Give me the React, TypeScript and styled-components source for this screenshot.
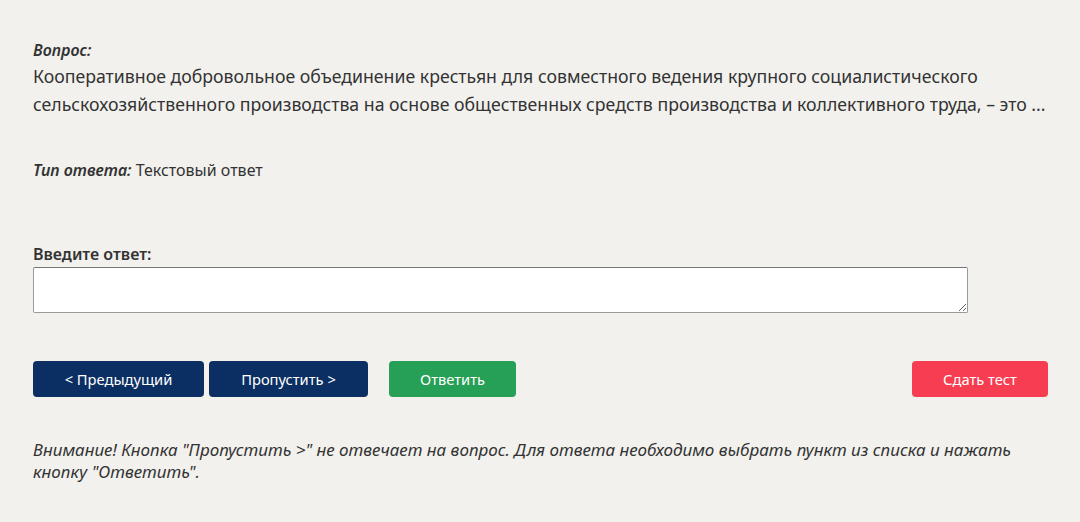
import styled, { createGlobalStyle } from 'styled-components';

const GlobalStyle = createGlobalStyle`
  html, body {
    margin: 0;
    padding: 0;
    background: #f2f1ee;
  }
  body {
    font-family: "Noto Sans", "Open Sans", sans-serif;
    color: #333;
  }
`;

const Page = styled.div`
  padding: 38px 32px 20px 33px;
  width: 1015px;
`;

const Label = styled.div`
  font-size: 16px;
  font-weight: 600;
  font-style: italic;
  line-height: 24px;
`;

const QuestionText = styled.div`
  font-size: 17.7px;
  line-height: 28px;
`;

const TypeRow = styled.div`
  margin-top: 40px;
  font-size: 16px;
  line-height: 24px;
`;

const TypeLabel = styled.span`
  font-weight: 600;
  font-style: italic;
`;

const AnswerBlock = styled.div`
  margin-top: 62px;
`;

const AnswerLabel = styled.label`
  display: block;
  font-size: 16px;
  font-weight: 600;
  line-height: 20px;
  margin-bottom: 3px;
`;

const AnswerInput = styled.textarea`
  display: block;
  box-sizing: border-box;
  width: 935px;
  height: 46px;
  margin: 0;
  border: 1px solid #9a9a9a;
  border-top-color: #767676;
  border-radius: 2px;
  background: #fff;
  resize: vertical;
`;

const ButtonRow = styled.div`
  display: flex;
  align-items: center;
  margin-top: 48px;
`;

const Button = styled.button<{ $variant: 'navy' | 'green' | 'red'; $width: number }>`
  box-sizing: border-box;
  width: ${(p) => p.$width}px;
  height: 36px;
  border: none;
  border-radius: 4px;
  color: #fff;
  font-family: "Noto Sans", "Open Sans", sans-serif;
  font-size: 14.7px;
  cursor: pointer;
  background: ${(p) =>
    p.$variant === 'navy' ? '#0c2f63' : p.$variant === 'green' ? '#26a056' : '#f73d52'};
`;

const Gap = styled.div<{ $w: number }>`
  width: ${(p) => p.$w}px;
`;

const Spacer = styled.div`
  flex: 1;
`;

const Notice = styled.p`
  margin: 42px 0 0;
  font-size: 17px;
  font-style: italic;
  line-height: 22px;
`;

const App = () => {
  return (
    <Page>
      <GlobalStyle />
      <Label>Вопрос:</Label>
      <QuestionText>
        Кооперативное добровольное объединение крестьян для совместного ведения крупного
        социалистического сельскохозяйственного производства на основе общественных средств
        производства и коллективного труда, – это ...
      </QuestionText>
      <TypeRow>
        <TypeLabel>Тип ответа:</TypeLabel> Текстовый ответ
      </TypeRow>
      <AnswerBlock>
        <AnswerLabel>Введите ответ:</AnswerLabel>
        <AnswerInput />
      </AnswerBlock>
      <ButtonRow>
        <Button $variant="navy" $width={171}>&lt; Предыдущий</Button>
        <Gap $w={5} />
        <Button $variant="navy" $width={159}>Пропустить &gt;</Button>
        <Gap $w={21} />
        <Button $variant="green" $width={127}>Ответить</Button>
        <Spacer />
        <Button $variant="red" $width={136}>Сдать тест</Button>
      </ButtonRow>
      <Notice>
        Внимание! Кнопка "Пропустить &gt;" не отвечает на вопрос. Для ответа необходимо выбрать
        пункт из списка и нажать кнопку "Ответить".
      </Notice>
    </Page>
  );
};

export default App;
